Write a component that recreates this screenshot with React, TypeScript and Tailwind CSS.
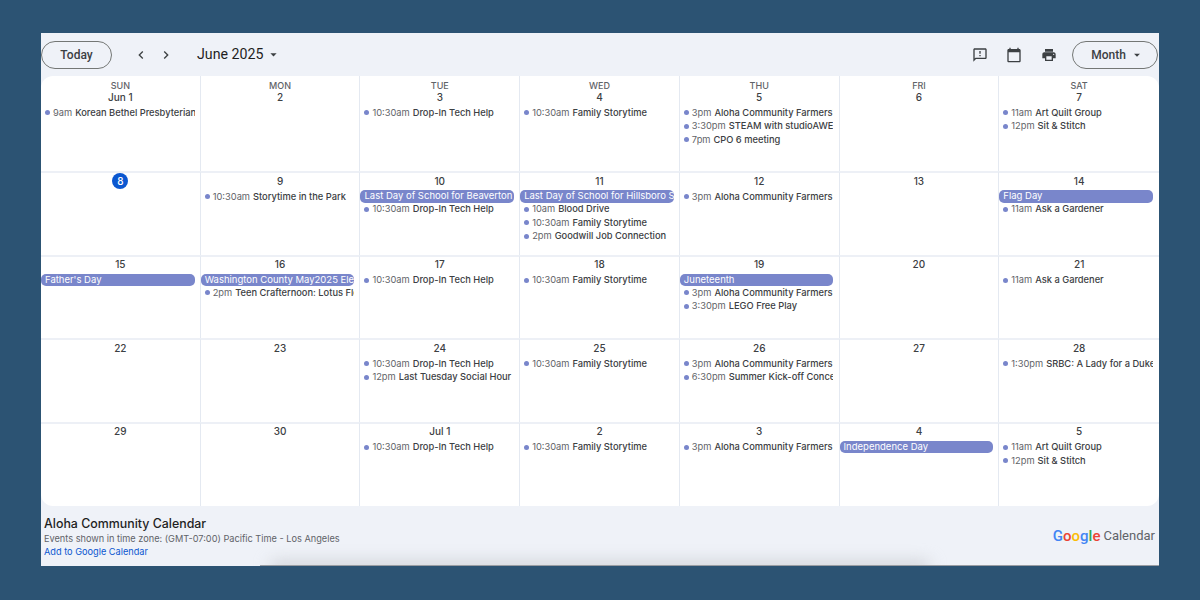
import React from 'react';

type Ev = { time?: string; title: string };
type Cell = { head?: string; date: string; today?: boolean; chip?: string; events?: Ev[] };

const rows: Cell[][] = [
  [
    { head: 'SUN', date: 'Jun 1', events: [{ time: '9am', title: 'Korean Bethel Presbyterian Church' }] },
    { head: 'MON', date: '2' },
    { head: 'TUE', date: '3', events: [{ time: '10:30am', title: 'Drop-In Tech Help' }] },
    { head: 'WED', date: '4', events: [{ time: '10:30am', title: 'Family Storytime' }] },
    {
      head: 'THU',
      date: '5',
      events: [
        { time: '3pm', title: "Aloha Community Farmers' Market" },
        { time: '3:30pm', title: 'STEAM with studioAWESOME' },
        { time: '7pm', title: 'CPO 6 meeting' },
      ],
    },
    { head: 'FRI', date: '6' },
    {
      head: 'SAT',
      date: '7',
      events: [
        { time: '11am', title: 'Art Quilt Group' },
        { time: '12pm', title: 'Sit & Stitch' },
      ],
    },
  ],
  [
    { date: '8', today: true },
    { date: '9', events: [{ time: '10:30am', title: 'Storytime in the Park' }] },
    { date: '10', chip: 'Last Day of School for Beaverton', events: [{ time: '10:30am', title: 'Drop-In Tech Help' }] },
    {
      date: '11',
      chip: 'Last Day of School for Hillsboro School District',
      events: [
        { time: '10am', title: 'Blood Drive' },
        { time: '10:30am', title: 'Family Storytime' },
        { time: '2pm', title: 'Goodwill Job Connection' },
      ],
    },
    { date: '12', events: [{ time: '3pm', title: "Aloha Community Farmers' Market" }] },
    { date: '13' },
    { date: '14', chip: 'Flag Day', events: [{ time: '11am', title: 'Ask a Gardener' }] },
  ],
  [
    { date: '15', chip: "Father's Day" },
    {
      date: '16',
      chip: 'Washington County May2025 Election',
      events: [{ time: '2pm', title: 'Teen Crafternoon: Lotus Flowers' }],
    },
    { date: '17', events: [{ time: '10:30am', title: 'Drop-In Tech Help' }] },
    { date: '18', events: [{ time: '10:30am', title: 'Family Storytime' }] },
    {
      date: '19',
      chip: 'Juneteenth',
      events: [
        { time: '3pm', title: "Aloha Community Farmers' Market" },
        { time: '3:30pm', title: 'LEGO Free Play' },
      ],
    },
    { date: '20' },
    { date: '21', events: [{ time: '11am', title: 'Ask a Gardener' }] },
  ],
  [
    { date: '22' },
    { date: '23' },
    {
      date: '24',
      events: [
        { time: '10:30am', title: 'Drop-In Tech Help' },
        { time: '12pm', title: 'Last Tuesday Social Hour' },
      ],
    },
    { date: '25', events: [{ time: '10:30am', title: 'Family Storytime' }] },
    {
      date: '26',
      events: [
        { time: '3pm', title: "Aloha Community Farmers' Market" },
        { time: '6:30pm', title: 'Summer Kick-off Concert' },
      ],
    },
    { date: '27' },
    { date: '28', events: [{ time: '1:30pm', title: 'SRBC: A Lady for a Duke' }] },
  ],
  [
    { date: '29' },
    { date: '30' },
    { date: 'Jul 1', events: [{ time: '10:30am', title: 'Drop-In Tech Help' }] },
    { date: '2', events: [{ time: '10:30am', title: 'Family Storytime' }] },
    { date: '3', events: [{ time: '3pm', title: "Aloha Community Farmers' Market" }] },
    { date: '4', chip: 'Independence Day' },
    {
      date: '5',
      events: [
        { time: '11am', title: 'Art Quilt Group' },
        { time: '12pm', title: 'Sit & Stitch' },
      ],
    },
  ],
];

const MaterialIcon = ({ d, className }: { d: string; className: string }) => (
  <svg viewBox="0 0 24 24" fill="currentColor" className={className}>
    <path d={d} />
  </svg>
);

const DROP = 'M7 10l5 5 5-5z';

const DayCell = ({ cell, col, row }: { cell: Cell; col: number; row: number }) => (
  <div className={`min-w-0 overflow-hidden ${col < 6 ? 'border-r border-[#e4e9f1]' : ''} ${row > 0 ? 'border-t-2 border-t-[#edf0f6]' : 'pt-[4px]'}`}>
    {cell.head && <div className="h-[11px] text-center text-[9px] leading-[11px] font-medium text-[#5f6368]">{cell.head}</div>}
    <div className={`flex items-center justify-center ${row === 0 ? 'h-[13px]' : 'h-[16px]'}`}>
      {cell.today ? (
        <span className="flex h-[16px] w-[16px] items-center justify-center rounded-full bg-[#0b57d0] text-[10px] font-medium text-white">{cell.date}</span>
      ) : (
        <span className="text-[10px] font-medium text-[#3c4043]">{cell.date}</span>
      )}
    </div>
    <div className={row === 0 ? 'mt-[2px]' : 'mt-[1px]'}>
      {cell.chip && (
        <div className="h-[12.5px] w-[153.5px] overflow-hidden rounded-[5px] bg-[#7986cb] pl-[4px] text-[9.5px] leading-[12.5px] whitespace-nowrap text-white">
          {cell.chip}
        </div>
      )}
      {cell.events?.map((ev) => (
        <div key={ev.title} className="flex h-[13.5px] w-[153.5px] items-center overflow-hidden pl-[4px] text-[9.3px] whitespace-nowrap">
          <span className="mr-[3px] h-[5px] w-[5px] shrink-0 rounded-full bg-[#7986cb]" />
          <span className="mr-[3px] text-[#5f6368]">{ev.time}</span>
          <span className="font-medium text-[#3c4043]">{ev.title}</span>
        </div>
      ))}
    </div>
  </div>
);

export default function App() {
  return (
    <div className="h-[600px] w-[1200px] overflow-hidden bg-[#2c5373] pt-[33px] pl-[41px] font-['Inter',sans-serif]">
      <div className="relative flex h-[533px] w-[1118px] flex-col bg-[#eff2f8]">
        {/* toolbar */}
        <div className="flex h-[43px] shrink-0 items-center text-[#3c4043]">
          <button className="h-[28px] w-[71px] rounded-full border border-[#747775] pt-[1px] font-['Roboto',sans-serif] text-[12px] font-medium">Today</button>
          <MaterialIcon d="M15.41 7.41L14 6l-6 6 6 6 1.41-1.41L10.83 12z" className="ml-[21px] h-[16px] w-[16px]" />
          <MaterialIcon d="M8.59 16.59L10 18l6-6-6-6-1.41 1.41L13.17 12z" className="ml-[9px] h-[16px] w-[16px]" />
          <span className="ml-[23px] font-['Roboto',sans-serif] text-[14.2px] text-[#1f1f1f]">June 2025</span>
          <MaterialIcon d={DROP} className="ml-[3px] h-[15px] w-[15px]" />
          <div className="ml-auto flex items-center">
            <MaterialIcon d="M20 2H4c-1.1 0-2 .9-2 2v18l4-4h14c1.1 0 2-.9 2-2V4c0-1.1-.9-2-2-2zm0 14H5.17L4 17.17V4h16v12zm-9-4h2v2h-2zm0-6h2v4h-2z" className="h-[16px] w-[16px]" />
            <MaterialIcon d="M20 3h-1V1h-2v2H7V1H5v2H4c-1.1 0-2 .9-2 2v16c0 1.1.9 2 2 2h16c1.1 0 2-.9 2-2V5c0-1.1-.9-2-2-2zm0 18H4V8h16v13z" className="ml-[18px] h-[16px] w-[16px]" />
            <MaterialIcon d="M19 8H5c-1.66 0-3 1.34-3 3v6h4v4h12v-4h4v-6c0-1.66-1.34-3-3-3zm-3 11H8v-5h8v5zm3-7c-.55 0-1-.45-1-1s.45-1 1-1 1 .45 1 1-.45 1-1 1zm-1-9H6v4h12V3z" className="ml-[19px] h-[16px] w-[16px]" />
            <button className="mr-[1px] ml-[15px] flex h-[28px] w-[86px] items-center justify-center rounded-full border border-[#747775] pt-[1px] pl-[5px] font-['Roboto',sans-serif] text-[12px] font-medium">
              Month
              <MaterialIcon d={DROP} className="ml-[4px] h-[14px] w-[14px]" />
            </button>
          </div>
        </div>

        {/* month grid */}
        <div className="grid h-[430px] shrink-0 grid-cols-7 grid-rows-[95px_83.5px_83.5px_83.5px_84.5px] overflow-hidden rounded-[12px] bg-white">
          {rows.map((week, r) => week.map((cell, c) => <DayCell key={`${r}-${c}`} cell={cell} col={c} row={r} />))}
        </div>

        {/* footer */}
        <div className="flex flex-1 items-start justify-between pt-[10px] pr-[4px] pl-[3px]">
          <div>
            <div className="text-[12.4px] leading-[15px] font-medium text-[#1f1f1f]">Aloha Community Calendar</div>
            <div className="mt-[1px] text-[9.2px] leading-[13px] text-[#5f6368]">Events shown in time zone: (GMT-07:00) Pacific Time - Los Angeles</div>
            <div className="text-[9.2px] leading-[13px] text-[#0b57d0]">Add to Google Calendar</div>
          </div>
          <div className="mt-[10px] flex items-center font-['Roboto',sans-serif]">
            <span className="text-[15px] leading-[18px] font-medium">
              <span className="text-[#4285f4]">G</span>
              <span className="text-[#ea4335]">o</span>
              <span className="text-[#fbbc05]">o</span>
              <span className="text-[#4285f4]">g</span>
              <span className="text-[#34a853]">l</span>
              <span className="text-[#ea4335]">e</span>
            </span>
            <span className="ml-[3px] text-[13px] text-[#5f6368]">Calendar</span>
          </div>
        </div>

        {/* soft shadow along the bottom edge */}
        <div className="absolute right-0 bottom-0 left-0 h-[26px] overflow-hidden">
          <div className="mx-[230px] mt-[22px] h-[10px] bg-[#c9cbd0] blur-[8px]" />
        </div>
        <div className="absolute right-0 bottom-0 left-[219px] h-[1px] bg-[#9a9da3]" />
      </div>
    </div>
  );
}
